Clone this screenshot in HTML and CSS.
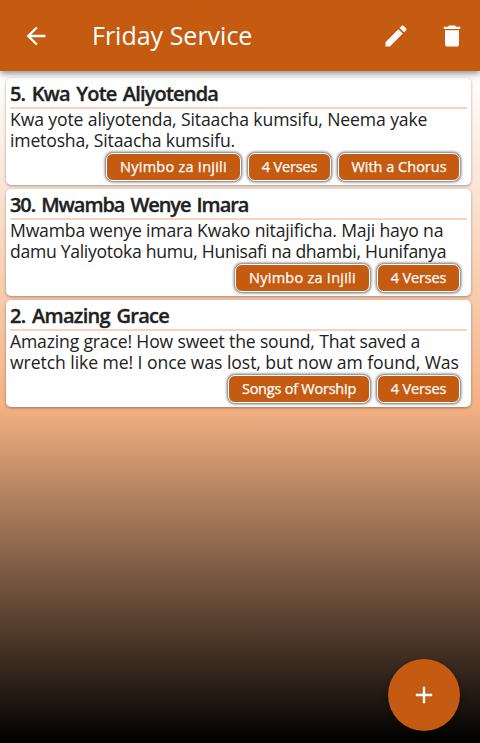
FILE: index.html
```
<!DOCTYPE html>
<html lang="en">
<head>
<meta charset="utf-8">
<title>Friday Service</title>
<link rel="stylesheet" href="styles.css">
</head>
<body>
<header class="app-bar">
  <svg class="icon back" viewBox="0 0 24 24"><path d="M20 11H7.83l5.59-5.59L12 4l-8 8 8 8 1.41-1.41L7.83 13H20v-2z"/></svg>
  <h1>Friday Service</h1>
  <svg class="icon edit" viewBox="0 0 24 24"><path d="M3 17.25V21h3.75L17.81 9.94l-3.75-3.75L3 17.25zM20.71 7.04a1 1 0 0 0 0-1.41l-2.34-2.34a1 1 0 0 0-1.41 0l-1.83 1.83 3.75 3.75 1.83-1.83z"/></svg>
  <svg class="icon" viewBox="0 0 24 24"><path d="M6 19c0 1.1.9 2 2 2h8c1.1 0 2-.9 2-2V7H6v12zM19 4h-3.5l-1-1h-5l-1 1H5v2h14V4z"/></svg>
</header>
<main class="songs">
  <article class="card">
    <h2 class="title-kwa">5. Kwa Yote Aliyotenda</h2>
    <p><span class="kwa-1">Kwa yote aliyotenda, Sitaacha kumsifu, Neema yake</span><br><span class="snug">imetosha, Sitaacha kumsifu.</span></p>
    <div class="tags"><span class="tag book">Nyimbo za Injili</span><span class="tag verses">4 Verses</span><span class="tag chorus">With a Chorus</span></div>
  </article>
  <article class="card">
    <h2 class="title-mwamba">30. Mwamba Wenye Imara</h2>
    <p><span class="snug">Mwamba wenye imara Kwako nitajificha. Maji hayo na</span><br><span class="mwamba-2">damu Yaliyotoka humu, Hunisafi na dhambi, Hunifanya</span></p>
    <div class="tags"><span class="tag book">Nyimbo za Injili</span><span class="tag verses">4 Verses</span></div>
  </article>
  <article class="card">
    <h2 class="title-grace">2. Amazing Grace</h2>
    <p><span class="snug">Amazing grace! How sweet the sound, That saved a</span><br><span class="grace-2">wretch like me! I once was lost, but now am found, Was</span></p>
    <div class="tags"><span class="tag worship">Songs of Worship</span><span class="tag verses">4 Verses</span></div>
  </article>
</main>
<button class="add" aria-label="Add song"><svg class="icon" viewBox="0 0 24 24"><path d="M19 13h-6v6h-2v-6H5v-2h6V5h2v6h6v2z"/></svg></button>
</body>
</html>
```
FILE: styles.css
```
* { box-sizing: border-box; }
body {
  margin: 0;
  height: 743px;
  overflow: hidden;
  color: #212121;
  font-family: "Trebuchet MS", "Open Sans", sans-serif;
  background: linear-gradient(#fff 71px, #f4b183 407px, #000 743px);
}
.app-bar {
  position: relative;
  display: flex;
  align-items: center;
  height: 71px;
  padding: 0 14px 0 22px;
  color: #fff;
  background: #c55a11;
  box-shadow: 0 2px 7px rgba(0,0,0,.5);
}
.icon { width: 28px; height: 28px; fill: currentColor; flex: none; }
.back { margin-right: 42px; }
.edit { margin-right: 28px; }
h1 { flex: 1; margin: -2px 0 0; font-size: 25px; font-weight: 400; white-space: nowrap; }
.songs { display: flex; flex-direction: column; gap: 4px; padding: 7px 9px 0 6px; }
.card {
  height: 107px;
  padding: 4px 4px 0;
  border-radius: 5px;
  background: #fff;
  box-shadow: 0 1px 3px rgba(0,0,0,.35);
}
h2 { margin: 0; height: 27px; border-bottom: 2px solid #f8d3ba; font-size: 20px; line-height: 24px; font-weight: 600; white-space: nowrap; word-spacing: 2px; -webkit-text-stroke: .35px currentColor; }
.title-kwa { letter-spacing: -.82px; }
.title-mwamba { letter-spacing: -1.07px; }
.title-grace { letter-spacing: -.7px; }
p { margin: 0; height: 44px; font-size: 17.6px; line-height: 21px; white-space: nowrap; }
.kwa-1 { letter-spacing: -.122px; }
.snug { letter-spacing: -.167px; }
.mwamba-2 { letter-spacing: -.298px; }
.grace-2 { letter-spacing: -.07px; }
.tags { display: flex; justify-content: flex-end; gap: 7px; padding-right: 7px; }
.tag { height: 28px; border: 1px solid #fff; border-radius: 7px; color: #fff; background: #c55a11; font-size: 14.5px; line-height: 25px; text-align: center; white-space: nowrap; box-shadow: 0 0 3px 1px rgba(0,0,0,.6); -webkit-text-stroke: .25px currentColor; }
.book { width: 135px; letter-spacing: .25px; }
.verses { width: 83px; letter-spacing: -.17px; }
.chorus { width: 122px; }
.worship { width: 142px; letter-spacing: -.23px; }
.add { position: absolute; left: 388px; top: 659px; display: flex; align-items: center; justify-content: center; width: 72px; height: 72px; padding: 0; border: 0; border-radius: 50%; color: #fff; background: #c55a11; box-shadow: 0 2px 6px rgba(0,0,0,.3); }
```
